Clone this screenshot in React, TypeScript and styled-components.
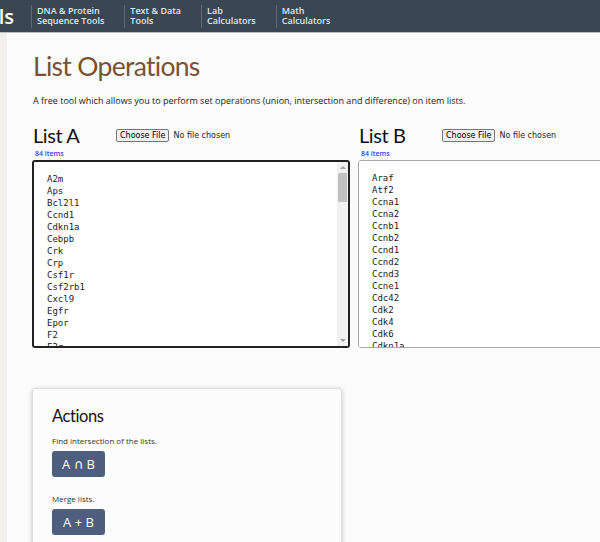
import React from 'react';
import styled, { createGlobalStyle } from 'styled-components';

const listA = [
  'A2m', 'Aps', 'Bcl2l1', 'Ccnd1', 'Cdkn1a', 'Cebpb', 'Crk', 'Crp', 'Csf1r', 'Csf2rb1', 'Cxcl9', 'Egfr',
  'Epor', 'F2', 'F2r', 'Fas', 'Fcer1a', 'Fcgr1', 'Fgf2', 'Fgfr1', 'Fos', 'Ghr', 'Grb2', 'Hck',
  'Icam1', 'Ifna1', 'Ifnar1', 'Ifnar2', 'Ifng', 'Ifngr1', 'Il10', 'Il10ra', 'Il2', 'Il2ra', 'Il2rb', 'Il2rg',
  'Il3', 'Il4', 'Il4ra', 'Il6', 'Il6st', 'Irf1', 'Isg15', 'Jak1', 'Jak2', 'Jak3', 'Jun', 'Junb',
  'Lepr', 'Mpl', 'Mx1', 'Myc', 'Nos2', 'Nr3c1', 'Oas1a', 'Pdgfra', 'Pias1', 'Pias3', 'Prlr', 'Ptpn1',
  'Ptpn11', 'Ptprc', 'Sh2b1', 'Sla2', 'Smad3', 'Socs1', 'Socs2', 'Socs3', 'Socs4', 'Socs5', 'Sp1', 'Src',
  'Stat1', 'Stat2', 'Stat3', 'Stat4', 'Stat5a', 'Stat5b', 'Stat6', 'Tgfb1', 'Tyk2', 'Usf1', 'Yy1', 'Ebi3',
];

const listB = [
  'Araf', 'Atf2', 'Ccna1', 'Ccna2', 'Ccnb1', 'Ccnb2', 'Ccnd1', 'Ccnd2', 'Ccnd3', 'Ccne1', 'Cdc42', 'Cdk2',
  'Cdk4', 'Cdk6', 'Cdkn1a', 'Cdkn1b', 'Cdkn2a', 'Cdkn2b', 'Chek1', 'Chek2', 'Csf1', 'Ctnnb1', 'E2f1', 'Egf',
  'Egfr', 'Elk1', 'Erbb2', 'Ets1', 'Ets2', 'Fgf2', 'Fgfr1', 'Fos', 'Grb2', 'Hras', 'Igf1', 'Igf1r',
  'Itga2', 'Itgb1', 'Jun', 'Kras', 'Map2k1', 'Mapk1', 'Mapk3', 'Mapk8', 'Mdm2', 'Met', 'Myb', 'Myc',
  'Nfkb1', 'Nras', 'Pdgfa', 'Pdgfrb', 'Pik3ca', 'Pik3r1', 'Plau', 'Plaur', 'Pten', 'Raf1', 'Rb1', 'Rela',
  'Rhoa', 'Shc1', 'Sos1', 'Src', 'Stat3', 'Tert', 'Tgfb1', 'Tgfbr1', 'Tnf', 'Tp53', 'Vegfa', 'Wnt1',
  'Ywhaz', 'Akt1', 'Apc', 'Bad', 'Bax', 'Bcl2', 'Brca1', 'Casp3', 'Casp8', 'Cdh1', 'Cflar', 'Ezh2',
];

const navItems = [
  ['DNA & Protein', 'Sequence Tools'],
  ['Text & Data', 'Tools'],
  ['Lab', 'Calculators'],
  ['Math', 'Calculators'],
];

const GlobalStyle = createGlobalStyle`
  html, body {
    margin: 0;
    overflow: hidden;
  }
  body {
    background: #f3efeb;
    font-family: 'Open Sans', 'DejaVu Sans', sans-serif;
    color: #222;
  }
`;

const NavBar = styled.nav`
  height: 32px;
  background: #3a4651;
  border-bottom: 1px solid #b9bec3;
  display: flex;
  align-items: center;
`;

const Brand = styled.div`
  width: 14px;
  margin-right: 17px;
  overflow: hidden;
  display: flex;
  justify-content: flex-end;
  color: #fff;
  font-size: 20px;
  font-weight: 600;
  white-space: nowrap;
`;

const NavItem = styled.a`
  border-left: 1px solid #5e6b77;
  padding: 1px 20px 1px 5px;
  color: #dce7f1;
  font-size: 9px;
  font-weight: 600;
  line-height: 10.5px;
  white-space: nowrap;
  text-decoration: none;
`;

const Shell = styled.div`
  display: flex;
  padding-left: 7px;
`;

const Main = styled.main`
  flex: 1;
  background: #fbfbfb;
  padding: 15px 0 40px 25px;
  min-height: 520px;
`;

const Title = styled.h1`
  margin: 0 0 0 1px;
  font-family: Lato, 'Open Sans', sans-serif;
  font-size: 26.5px;
  font-weight: 400;
  letter-spacing: -0.7px;
  color: #7b5231;
  line-height: 36px;
`;

const Lead = styled.p`
  margin: 10px 0 0 1px;
  font-size: 9px;
  color: #222;
`;

const Lists = styled.div`
  display: grid;
  grid-template-columns: 318px 318px;
  column-gap: 8px;
  margin-top: 16px;
`;

const ListHeader = styled.div`
  display: flex;
  align-items: center;
`;

const ListTitle = styled.h2`
  flex: 0 0 84px;
  margin: 0 0 0 1px;
  font-family: Lato, 'Open Sans', sans-serif;
  font-size: 20px;
  font-weight: 400;
  letter-spacing: -0.4px;
  line-height: 24px;
  color: #111;
`;

const FileInput = styled.input`
  margin-left: -1px;
  font-family: 'DejaVu Sans', sans-serif;
  font-size: 8px;
  color: #222;

  &::file-selector-button {
    font-family: 'DejaVu Sans', sans-serif;
    font-size: 8px;
    padding: 1px 3px;
    margin-right: 4px;
    border: 1px solid #767676;
    border-radius: 2px;
    background: #efefef;
  }
`;

const Count = styled.div`
  margin: 2px 0 2px 3px;
  font-size: 7px;
  font-weight: 600;
  color: #3b3bf0;
`;

const BoxWrap = styled.div`
  position: relative;
  width: 318px;
`;

const ListBox = styled.textarea<{ $active?: boolean }>`
  box-sizing: border-box;
  display: block;
  width: 318px;
  height: 188px;
  padding: 11px 13px;
  resize: none;
  background: #fff;
  border: ${(p) => (p.$active ? '2px solid #222' : '1px solid #a9a9a9')};
  border-radius: 3px;
  outline: none;
  font-family: 'DejaVu Sans Mono', monospace;
  font-size: 9px;
  line-height: 12px;
  color: #222;
`;

/* drawn scrollbar: the headless browser hides native ones */
const ScrollTrack = styled.div`
  position: absolute;
  top: 2px;
  right: 2px;
  bottom: 2px;
  width: 11px;
  background: #f1f1f1;
  display: flex;
  flex-direction: column;
  align-items: center;
`;

const Arrow = styled.div<{ $down?: boolean }>`
  height: 11px;
  display: flex;
  align-items: center;
  justify-content: center;
  margin-top: ${(p) => (p.$down ? 'auto' : '0')};

  &::before {
    content: '';
    border-left: 3px solid transparent;
    border-right: 3px solid transparent;
    ${(p) => (p.$down ? 'border-top: 3px solid #a3a3a3;' : 'border-bottom: 3px solid #a3a3a3;')}
  }
`;

const Thumb = styled.div`
  width: 9px;
  height: 29px;
  background: #c1c1c1;
`;

const Card = styled.section`
  width: 310px;
  box-sizing: border-box;
  margin-top: 40px;
  padding: 14px 19px 20px;
  background: #fcfcfc;
  border: 1px solid #dedede;
  border-radius: 3px;
  box-shadow: 0 1px 4px rgba(0, 0, 0, 0.22);
`;

const CardTitle = styled.h3`
  margin: 0 0 6px;
  font-family: Lato, 'Open Sans', sans-serif;
  font-size: 16.5px;
  font-weight: 400;
  letter-spacing: -0.4px;
  line-height: 26px;
  color: #111;
`;

const Hint = styled.p`
  margin: 0 0 5px;
  font-size: 8px;
  color: #333;
`;

const OpButton = styled.button`
  width: 53px;
  height: 26px;
  margin-bottom: 16px;
  border: none;
  border-radius: 3px;
  background: #4e5e7e;
  color: #fff;
  font-family: 'Open Sans', 'DejaVu Sans', sans-serif;
  font-size: 13px;
`;

const App: React.FC = () => {
  return (
    <>
      <GlobalStyle />
      <NavBar>
        <Brand>Tools</Brand>
        {navItems.map(([a, b]) => (
          <NavItem key={a} href="#">
            {a}
            <br />
            {b}
          </NavItem>
        ))}
      </NavBar>
      <Shell>
        <Main>
          <Title>List Operations</Title>
          <Lead>
            A free tool which allows you to perform set operations (union, intersection and difference) on item lists.
          </Lead>
          <Lists>
            {[
              { name: 'List A', items: listA, active: true },
              { name: 'List B', items: listB, active: false },
            ].map((l) => (
              <div key={l.name}>
                <ListHeader>
                  <ListTitle>{l.name}</ListTitle>
                  <FileInput type="file" />
                </ListHeader>
                <Count>84 items</Count>
                <BoxWrap>
                  <ListBox $active={l.active} defaultValue={l.items.join('\n')} spellCheck={false} />
                  {l.active && (
                    <ScrollTrack>
                      <Arrow />
                      <Thumb />
                      <Arrow $down />
                    </ScrollTrack>
                  )}
                </BoxWrap>
              </div>
            ))}
          </Lists>
          <Card>
            <CardTitle>Actions</CardTitle>
            <Hint>Find intersection of the lists.</Hint>
            <OpButton>A ∩ B</OpButton>
            <Hint>Merge lists.</Hint>
            <OpButton>A + B</OpButton>
          </Card>
        </Main>
      </Shell>
    </>
  );
};

export default App;
